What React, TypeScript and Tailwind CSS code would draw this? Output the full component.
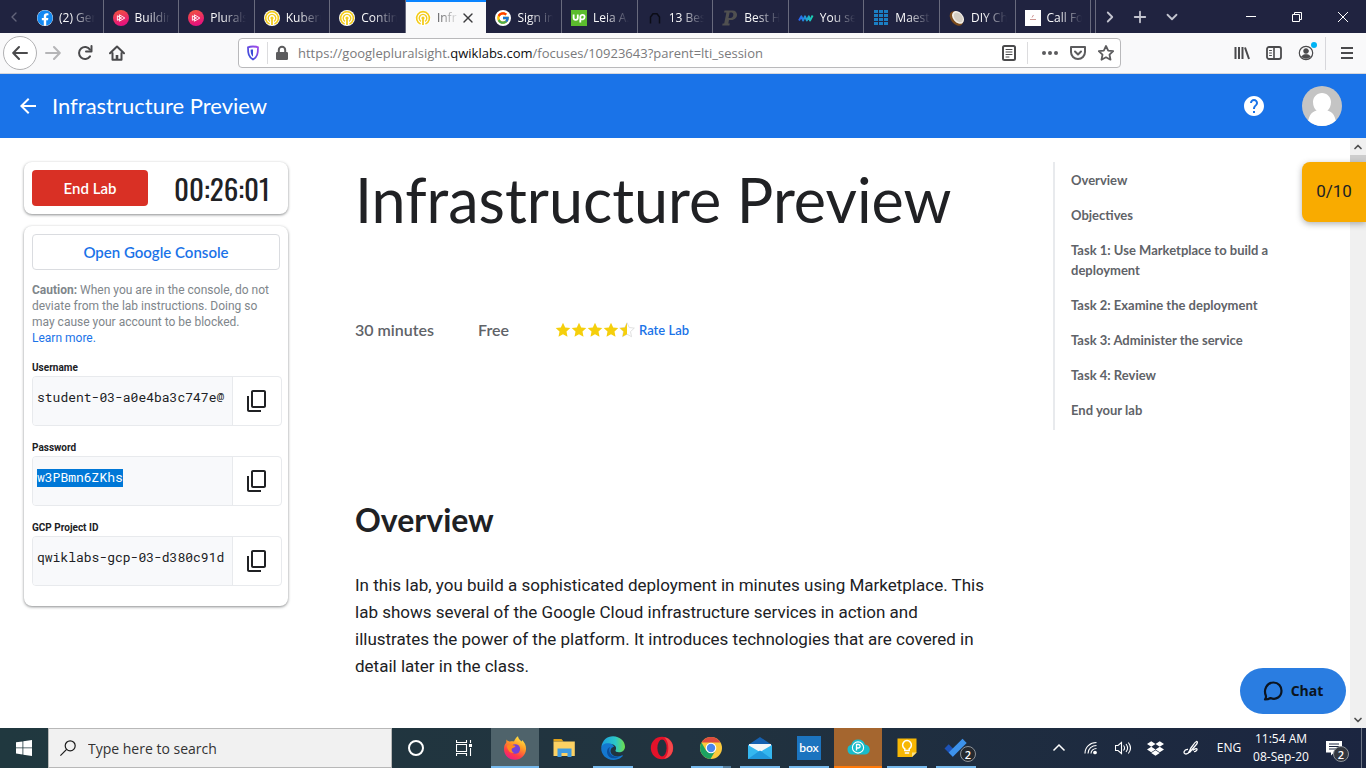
import type { ReactNode } from "react";
import { MdArrowBack, MdContentCopy, MdHelp } from "react-icons/md";
import { FaDropbox, FaFacebook } from "react-icons/fa";
import { FcGoogle } from "react-icons/fc";
import { ChevronDown, ChevronLeft, ChevronRight, ChevronUp, Plus, X } from "lucide-react";

const ui = "font-['Open_Sans','Noto_Sans',sans-serif]";
const product = "font-['Lato','Open_Sans',sans-serif]";

/* ---------- favicons ---------- */

const Pluralsight = () => (
  <svg viewBox="0 0 16 16" className="size-4">
    <defs>
      <linearGradient id="ps" x1="0" y1="0" x2="0.3" y2="1">
        <stop offset="0" stopColor="#f2583a" />
        <stop offset="1" stopColor="#e6127d" />
      </linearGradient>
    </defs>
    <circle cx="8" cy="8" r="8" fill="url(#ps)" />
    <path d="M6.4 4.8 11.8 8l-5.4 3.2zM4.4 5.8 8.6 8l-4.2 2.3z" fill="none" stroke="#fff" strokeWidth="0.9" />
  </svg>
);

const Qwiklabs = () => (
  <svg viewBox="0 0 16 16" className="size-4">
    <circle cx="8" cy="8" r="8" fill="#fff" />
    <g fill="none" stroke="#f4cc1c">
      <path d="M5.6 14A6.4 6.4 0 1 1 10.4 14" strokeWidth="1.6" />
      <path d="M6 11.4A3.8 3.8 0 1 1 10 11.4" strokeWidth="1.4" />
      <path d="M8 8v7" strokeWidth="1.8" />
    </g>
    <circle cx="8" cy="8" r="1.6" fill="#f4cc1c" />
  </svg>
);

const Upwork = () => (
  <svg viewBox="0 0 16 16" className="size-4">
    <path d="M0 0h16v16H0z" fill="#5bbc2e" />
    <path d="M2.6 4.5v3.3c0 2.8 4.2 2.8 4.2 0V4.5M9.3 12.6V7.2c0-3.2 4.3-3 4.3-.2 0 2.6-3 3-4.3 1.6" fill="none" stroke="#fff" strokeWidth="1.8" />
  </svg>
);

const Arch = () => (
  <svg viewBox="0 0 16 16" className="size-4">
    <path d="M3.5 13.5V7L6 3.8h4L12.5 7v6.5" fill="none" stroke="#0b0c16" strokeWidth="1.5" />
  </svg>
);

const LetterMark = () => (
  <svg viewBox="0 0 16 16" className="size-4">
    <path d="M2.500.500h8c6.500 0 6 9.500-1.500 9.500H7l-.7 3.500h1.500l-.4 2H.2l.4-2h1.600L4.400 2.500H2zM7.600 2.500 6.500 8h1.800c3.500 0 4-5.500 1.300-5.500z" fill="#505050" fillRule="evenodd" />
  </svg>
);

const Wave = () => (
  <svg viewBox="0 0 16 16" className="size-4">
    <defs>
      <linearGradient id="wave">
        <stop offset="0" stopColor="#2a63f6" />
        <stop offset="1" stopColor="#19d3b0" />
      </linearGradient>
    </defs>
    <path d="m1 10.5 2.4-4.2 1.6 4.2 2-4.2 1.8 4.2 2-4.2 1.2 4.2 2.6-5" fill="none" stroke="url(#wave)" strokeWidth="1.9" strokeLinejoin="round" />
  </svg>
);

const Grid = () => (
  <svg viewBox="0 0 16 16" className="size-4" fill="#1b7fc4">
    {[1, 5, 9, 13].map((y) => [1, 6, 11].map((x) => <path key={`${x}-${y}`} d={`M${x} ${y - 1}h4v3h-4z`} />))}
  </svg>
);

const Coconut = () => (
  <svg viewBox="0 0 16 16" className="size-4">
    <ellipse cx="7.5" cy="8.4" rx="5.6" ry="8.2" transform="rotate(-40 7.5 8.4)" fill="#7a4a1c" />
    <ellipse cx="9" cy="7.4" rx="5" ry="7.2" transform="rotate(-40 9 7.4)" fill="#f3efe8" />
    <ellipse cx="9.3" cy="7.4" rx="3.7" ry="5.6" transform="rotate(-40 9.3 7.4)" fill="#d5cec3" />
  </svg>
);

const Card = () => (
  <svg viewBox="0 0 16 16" className="size-4">
    <path d="M0 0h16v16H0z" fill="#fff" />
    <path d="M7 7.5 8.5 5M5 9.5h6" stroke="#c98b86" strokeWidth="0.9" />
  </svg>
);

/* ---------- browser chrome ---------- */

type TabData = { label: string; icon: ReactNode; active?: boolean };

const tabs: TabData[] = [
  { label: "(2) Ger", icon: <FaFacebook className="size-4 rounded-full bg-white text-[#1489f2]" /> },
  { label: "Buildin", icon: <Pluralsight /> },
  { label: "Plurals", icon: <Pluralsight /> },
  { label: "Kubern", icon: <Qwiklabs /> },
  { label: "Contin", icon: <Qwiklabs /> },
  { label: "Infr", icon: <Qwiklabs />, active: true },
  { label: "Sign in", icon: <FcGoogle className="size-4 rounded-full bg-white p-px" /> },
  { label: "Leia A.", icon: <Upwork /> },
  { label: "13 Bes", icon: <Arch /> },
  { label: "Best H", icon: <LetterMark /> },
  { label: "You se", icon: <Wave /> },
  { label: "Maest", icon: <Grid /> },
  { label: "DIY Ch", icon: <Coconut /> },
  { label: "Call Fo", icon: <Card /> },
];

function TabStrip() {
  return (
    <div className="flex h-[33px] shrink-0 bg-[#202340]">
      <button aria-label="Scroll tabs left" className="flex w-7 shrink-0 items-center justify-center text-[#62647a]">
        <ChevronLeft className="size-4" />
      </button>
      <div role="tablist" className="flex min-w-0 flex-1">
        {tabs.map((tab, i) =>
          tab.active ? (
            <div key={i} className="flex min-w-0 flex-1 items-center border-t-2 border-[#0a84ff] bg-[#f9f9fa] pr-[10px] pl-[9px]">
              <button role="tab" aria-selected className="flex min-w-0 flex-1 items-center gap-[6px]">
                <span className="shrink-0">{tab.icon}</span>
                <span className="flex-1 overflow-hidden text-left text-xs leading-5 whitespace-nowrap text-[#0c0c0d] [mask-image:linear-gradient(to_right,#000b,transparent)]">
                  {tab.label}
                </span>
              </button>
              <button aria-label="Close tab" className="shrink-0 text-[#3c3c3e]">
                <X className="size-4" />
              </button>
            </div>
          ) : (
            <button
              key={i}
              role="tab"
              aria-selected={false}
              className="flex min-w-0 flex-1 items-center gap-[6px] border-r border-[#686a7d] pt-[2px] pr-1 pl-[9px]"
            >
              <span className="shrink-0">{tab.icon}</span>
              <span className="flex-1 overflow-hidden text-left text-xs leading-5 whitespace-nowrap text-[#f9f9fa] [mask-image:linear-gradient(to_right,#000_30%,transparent_90%)]">
                {tab.label}
              </span>
            </button>
          ),
        )}
      </div>
      <div className="ml-1 flex shrink-0 items-center border-l border-[#686a7d] text-[#c3c4cf]">
        <button aria-label="Scroll tabs right" className="flex w-7 justify-center">
          <ChevronRight className="size-[18px]" strokeWidth={2.4} />
        </button>
        <button aria-label="New tab" className="flex w-8 justify-center">
          <Plus className="size-[18px]" strokeWidth={2.4} />
        </button>
        <button aria-label="List all tabs" className="flex w-8 justify-center">
          <ChevronDown className="size-[18px]" strokeWidth={2.4} />
        </button>
      </div>
      <div className="ml-10 flex shrink-0 text-white">
        {[
          ["Minimise", "M1 5.5h10"],
          ["Restore", "M1.5 3.5h7v7h-7zM3.5 3V1.5h7v7H9"],
          ["Close", "m1 1 10 10M11 1 1 11"],
        ].map(([name, d]) => (
          <button key={name} aria-label={name} className="flex w-[46px] items-center justify-center">
            <svg viewBox="0 0 12 12" className="size-3">
              <path d={d} fill="none" stroke="currentColor" />
            </svg>
          </button>
        ))}
      </div>
    </div>
  );
}

function ToolButton({ label, children }: { label: string; children: ReactNode }) {
  return (
    <button aria-label={label} className="flex w-8 shrink-0 items-center justify-center text-[#4a4a4c]">
      <svg viewBox="0 0 16 16" className="size-4" fill="none" stroke="currentColor" strokeWidth="2" strokeLinecap="round" strokeLinejoin="round">
        {children}
      </svg>
    </button>
  );
}

function Toolbar() {
  return (
    <div className="flex h-[41px] shrink-0 items-center border-b border-[#d7d7db] bg-[#f9f9fa]">
      <button aria-label="Back" className="ml-[3px] flex size-[34px] shrink-0 items-center justify-center rounded-full border border-[#b1b1b3] bg-white text-[#4a4a4c]">
        <svg viewBox="0 0 16 16" className="size-4" fill="none" stroke="currentColor" strokeWidth="2" strokeLinecap="round" strokeLinejoin="round">
          <path d="M15 8H1.5M7 2 1.2 8 7 14" />
        </svg>
      </button>
      <button aria-label="Forward" className="flex w-8 shrink-0 items-center justify-center text-[#b5b5b7]">
        <svg viewBox="0 0 16 16" className="size-4" fill="none" stroke="currentColor" strokeWidth="2" strokeLinecap="round" strokeLinejoin="round">
          <path d="M1 8h13.5M9 2l5.8 6L9 14" />
        </svg>
      </button>
      <ToolButton label="Reload">
        <path d="M13 11.4A6 6 0 1 1 13 4.6" />
        <path d="M14.5 1v5.5H9" />
      </ToolButton>
      <ToolButton label="Home">
        <path d="M1 8.2 8 1.5l7 6.7M3.5 8v6.8h9V8" />
        <path d="M8 14v-4" strokeWidth="2.6" strokeLinecap="butt" />
      </ToolButton>
      <div className="mr-[105px] ml-[105px] flex h-[30px] min-w-0 flex-1 items-center rounded-sm border border-[#b9b9bb] bg-white">
        <button aria-label="Tracking protection" className="flex w-7 shrink-0 justify-center">
          <svg viewBox="0 0 16 16" className="size-4">
            <defs>
              <linearGradient id="shield" x1="1" y1="0" x2="0" y2="1">
                <stop offset="0" stopColor="#a54bea" />
                <stop offset="1" stopColor="#2a4fd8" />
              </linearGradient>
            </defs>
            <path d="M8 1.5c2 0 4 .4 5 .9 0 6-.6 9.6-5 12.1-4.400-2.500-5-6.100-5-12.100 1-.5 3-.9 5-.9z" fill="none" stroke="url(#shield)" strokeWidth="1.8" />
            <path d="M8 4.500c-1 0-1.800.1-2.400.3.1 3.500.6 5.400 2.400 6.900z" fill="#3a4bd6" />
          </svg>
        </button>
        <span className="h-[22px] w-px shrink-0 bg-[#dcdcde]" />
        <button aria-label="Site information" className="flex w-7 shrink-0 justify-center">
          <svg viewBox="0 0 16 16" className="size-4">
            <path d="M4.800 8V5a3.200 3.200 0 0 1 6.400 0v3" fill="none" stroke="#5c5c5e" strokeWidth="2" />
            <rect x="2" y="7" width="12" height="8" rx="1.200" fill="#5c5c5e" />
          </svg>
        </button>
        <label className="relative min-w-0 flex-1 truncate pl-[2px] text-[13px] leading-6 text-[#7a7a7c]">
          <input aria-label="Address" className="absolute inset-0 w-full opacity-0" />
          https://googlepluralsight.<span className="text-[#0c0c0d]">qwiklabs.com</span>/focuses/10923643?parent=lti_session
        </label>
        <ToolButton label="Reader view">
          <rect x="2" y="1" width="12" height="14" rx="1.500" />
          <path d="M5 4.500h6M5 7h6M5 9.500h6M5 12h3" strokeWidth="1" />
        </ToolButton>
        <span className="ml-[2px] h-[22px] w-px shrink-0 bg-[#dcdcde]" />
        <div className="flex w-[92px] shrink-0 justify-end">
          <button aria-label="Page actions" className="flex w-7 items-center justify-center text-[#5c5c5e]">
            <svg viewBox="0 0 16 16" className="size-4" fill="currentColor">
              <circle cx="2" cy="8" r="2" />
              <circle cx="8" cy="8" r="2" />
              <circle cx="14" cy="8" r="2" />
            </svg>
          </button>
          <button aria-label="Save to Pocket" className="flex w-7 items-center justify-center text-[#5c5c5e]">
            <svg viewBox="0 0 16 16" className="size-4" fill="none" stroke="currentColor" strokeWidth="2" strokeLinecap="round" strokeLinejoin="round">
              <path d="M1 2h14v5a7 7 0 0 1-14 0z" />
              <path d="m5 6.500 3 3 3-3" />
            </svg>
          </button>
          <button aria-label="Bookmark" className="flex w-7 items-center justify-center text-[#5c5c5e]">
            <svg viewBox="0 0 16 16" className="size-4" fill="none" stroke="currentColor" strokeWidth="1.800" strokeLinejoin="round">
              <path d="m8 1 2.200 4.600 5 .6-3.700 3.500 1 5L8 12.300l-4.500 2.400 1-5L.8 6.200l5-.6z" />
            </svg>
          </button>
        </div>
      </div>
      <ToolButton label="Library">
        <path d="M1.500 2v12M5 2v12M8.500 2v12M11 2.500l4 11.500" strokeLinecap="butt" />
      </ToolButton>
      <ToolButton label="Sidebars">
        <rect x="1" y="2" width="14" height="12" rx="2" strokeWidth="1.800" />
        <path d="M8 2v12" strokeWidth="1.600" />
        <path d="M3.500 5.500h2M3.500 8h2M3.500 10.500h2" strokeWidth="1" />
      </ToolButton>
      <div className="relative">
        <ToolButton label="Account">
          <circle cx="8" cy="8" r="6.700" strokeWidth="1.200" />
          <circle cx="8" cy="6" r="2.500" fill="currentColor" strokeWidth="0.500" />
          <path d="M3.600 11.800c1.200-3.400 7.600-3.400 8.800 0-2.400 2.300-6.400 2.300-8.800 0z" fill="currentColor" strokeWidth="0.500" />
        </ToolButton>
        <span className="absolute -top-[3px] right-[5px] size-[6px] rounded-full bg-[#00b3f4]" />
      </div>
      <span className="ml-[3px] h-[33px] w-px shrink-0 bg-[#d7d7db]" />
      <div className="mr-[3px] ml-[5px] flex">
        <ToolButton label="Menu">
          <path d="M2 3h12M2 8h12M2 13h12" strokeLinecap="butt" />
        </ToolButton>
      </div>
    </div>
  );
}

/* ---------- lab page ---------- */

function LabHeader() {
  return (
    <header className={`flex h-16 shrink-0 items-center bg-[#1a73e8] px-6 text-white ${product}`}>
      <a href="#back" aria-label="Back" className="-ml-2 flex w-6 justify-center">
        <MdArrowBack className="size-6" />
      </a>
      <h2 className="ml-3 flex-1 text-[22px] leading-8">Infrastructure Preview</h2>
      <button aria-label="Help" className="mr-9">
        <MdHelp className="size-6" />
      </button>
      <button aria-label="Account">
        <svg viewBox="0 0 40 40" className="size-10 rounded-full">
          <path d="M0 0h40v40H0z" fill="#c4c4c4" />
          <path d="M20 7c5 0 9 4 9 9 0 4-1.600 7-3.600 8.600C31 26 34 31 34.500 40h-29C6 31 9 26 14.600 24.600 12.600 23 11 20 11 16c0-5 4-9 9-9z" fill="#fff" />
        </svg>
      </button>
    </header>
  );
}

const fields = [
  { id: "username", label: "Username", value: "student-03-a0e4ba3c747e@" },
  { id: "password", label: "Password", value: "w3PBmn6ZKhs", selected: true },
  { id: "project", label: "GCP Project ID", value: "qwiklabs-gcp-03-d380c91d" },
];

const cardShadow = "rounded-lg bg-white shadow-[0_1px_3px_rgba(60,64,67,0.6)]";

function LabPanel() {
  return (
    <aside className="flex w-[264px] shrink-0 flex-col gap-3 font-['Roboto',sans-serif]">
      <div className={`flex h-[52px] items-center p-2 ${cardShadow}`}>
        <button className={`h-9 w-[116px] rounded bg-[#d93025] text-[15px] font-semibold text-white ${product}`}>End Lab</button>
        <time className="flex-1 pl-4 text-center font-['Oswald','Roboto_Condensed','Liberation_Sans_Narrow',sans-serif] text-[29px] leading-9 text-[#202124]">
          00:26:01
        </time>
      </div>
      <div className={`px-2 pt-2 pb-5 ${cardShadow}`}>
        <button className={`h-9 w-full rounded border border-[#dadce0] text-[15px] font-semibold text-[#1a73e8] ${product}`}>
          Open Google Console
        </button>
        <p className="mt-3 text-xs leading-4 text-[#80868b]">
          <b>Caution:</b> When you are in the console, do not deviate from the lab instructions. Doing so may cause your
          account to be blocked.{" "}
          <a href="#learn" className="block text-[#1a73e8]">
            Learn more.
          </a>
        </p>
        <div className="mt-[14px] -mr-[2px] flex flex-col gap-[14px]">
          {fields.map((f) => (
            <div key={f.id}>
              <label htmlFor={f.id} className="block text-[10px] leading-4 font-bold text-[#202124]">
                {f.label}
              </label>
              <div className="flex h-[50px] overflow-hidden rounded border border-[#e8eaed]">
                <div className="min-w-0 flex-1 bg-[#f8f9fb] px-1 pt-3">
                  <input
                    id={f.id}
                    readOnly
                    value={f.value}
                    className={
                      f.selected
                        ? "block field-sizing-content h-[18px] bg-[#0078d7] font-['Roboto_Mono','Liberation_Mono',monospace] text-[13px] text-white outline-none"
                        : "block h-[18px] w-full bg-transparent font-['Roboto_Mono','Liberation_Mono',monospace] text-[13px] text-[#202124] outline-none"
                    }
                  />
                </div>
                <button aria-label={`Copy ${f.label}`} className="flex w-[49px] items-center justify-center border-l border-[#e8eaed] text-[#202124]">
                  <MdContentCopy className="size-6 -scale-y-100" />
                </button>
              </div>
            </div>
          ))}
        </div>
      </div>
    </aside>
  );
}

const star = "m8 .8 2.200 4.700 5.100.6-3.800 3.500 1 5.100L8 12.200l-4.500 2.500 1-5.100L.7 6.100l5.100-.6z";

function Article() {
  return (
    <article className="ml-[67px] min-w-0 flex-1 pr-[60px]">
      <h1 className={`-mr-10 text-[61px] leading-[76px] whitespace-nowrap text-[#202124] ${product}`}>Infrastructure Preview</h1>
      <div className={`mt-[82px] flex items-center text-[#5f6368] ${product}`}>
        <span className="w-[123px] text-base leading-5 font-semibold">30 minutes</span>
        <span className="w-[77px] text-base leading-5 font-semibold">Free</span>
        <span className="flex" role="img" aria-label="Rated 4.5 out of 5">
          {[0, 1, 2, 3].map((i) => (
            <svg key={i} viewBox="0 0 16 16" className="size-4">
              <path d={star} fill="#f5cf0c" />
            </svg>
          ))}
          <svg viewBox="0 0 16 16" className="size-4">
            <defs>
              <clipPath id="half">
                <path d="M0 0h8v16H0z" />
              </clipPath>
            </defs>
            <path d={star} fill="none" stroke="#d8d8d8" strokeWidth="0.800" />
            <path d={star} fill="#f5cf0c" clipPath="url(#half)" />
          </svg>
        </span>
        <a href="#rate" className="ml-1 text-[13px] leading-5 font-semibold text-[#1a73e8]">
          Rate Lab
        </a>
      </div>
      <h2 className={`mt-40 text-[32px] leading-10 font-bold text-[#202124] ${product}`}>Overview</h2>
      <p className="mt-8 font-['Roboto',sans-serif] text-[17px] leading-[27px] text-[#202124]">
        In this lab, you build a sophisticated deployment in minutes using Marketplace. This lab shows several of the
        Google Cloud infrastructure services in action and illustrates the power of the platform. It introduces
        technologies that are covered in detail later in the class.
      </p>
    </article>
  );
}

const outline = [
  "Overview",
  "Objectives",
  "Task 1: Use Marketplace to build a deployment",
  "Task 2: Examine the deployment",
  "Task 3: Administer the service",
  "Task 4: Review",
  "End your lab",
];

function Outline() {
  return (
    <nav className={`mr-16 w-[233px] shrink-0 self-start border-l-2 border-[#e8eaed] pt-2 pb-[10px] pl-4 text-[13px] leading-5 font-bold text-[#5f6368] ${product}`}>
      <ul className="flex flex-col gap-[15px]">
        {outline.map((item) => (
          <li key={item}>
            <a href="#section" className="block">
              {item}
            </a>
          </li>
        ))}
      </ul>
    </nav>
  );
}

function ScrollBar() {
  return (
    <div className="flex w-4 shrink-0 flex-col items-center bg-[#f0f0f0] text-[#505050]">
      <button aria-label="Scroll up" className="flex h-[17px] items-center">
        <ChevronUp className="size-3" strokeWidth={3.5} />
      </button>
      <div className="h-12 w-full bg-[#cdcdcd]" />
      <button aria-label="Scroll down" className="mt-auto flex h-[17px] items-center">
        <ChevronDown className="size-3" strokeWidth={3.5} />
      </button>
    </div>
  );
}

/* ---------- taskbar ---------- */

const Firefox = () => (
  <svg viewBox="0 0 24 24" className="size-6">
    <defs>
      <linearGradient id="fx" x1="0.8" y1="0" x2="0.3" y2="1">
        <stop offset="0" stopColor="#fff04a" />
        <stop offset="0.4" stopColor="#ff9a25" />
        <stop offset="0.75" stopColor="#ff3b47" />
        <stop offset="1" stopColor="#ee1a86" />
      </linearGradient>
    </defs>
    <path d="M3.500 3.500C4.500 5 5.500 5.300 7 5.600 8.500 5 10 5 11 5.500 12 3 13.500 1 15 .3c.3 2.500 2 3.600 3.300 5 .6.5.7-.6.8-1.200C22 7 23.300 10 23 13.500 22.500 19.500 18 23.700 12 23.700 5.500 23.700 1 19 1 13c0-3 .7-4.500 2.200-6.200z" fill="url(#fx)" />
    <circle cx="12.300" cy="13" r="4.800" fill="#7441d8" />
    <path d="M4 9.500c3-1.600 6-.5 8.500.5-.5 1.500-2.500 1.500-3.500 2.500s0 3.500 2 4.500c-4 .5-7-3-7-7.500z" fill="#ff8a1d" />
  </svg>
);

const Explorer = () => (
  <svg viewBox="0 0 24 24" className="size-6">
    <path d="M1.500 3h8l2 2.500h-10z" fill="#e0a21a" />
    <path d="M1.500 5.500h21.300V20H1.500z" fill="#fcd163" />
    <path d="M5.500 21v-8.500h14V21h-4v-4h-6v4z" fill="#3f9be0" />
  </svg>
);

const Edge = () => (
  <svg viewBox="0 0 24 24" className="size-6">
    <defs>
      <linearGradient id="edgeTop">
        <stop offset="0" stopColor="#1b9fe0" />
        <stop offset="0.6" stopColor="#2cc7c8" />
        <stop offset="1" stopColor="#6fe04a" />
      </linearGradient>
    </defs>
    <path d="M.3 11C1.500 4 6 .2 12 .2c7 0 12 5.300 12 10.300 0 4-3 5.800-6 5.800-2.500 0-4-1-3.500-2 2-3-1-6.300-5-6.300-4.500 0-7.500 1.500-9.200 3z" fill="url(#edgeTop)" />
    <path d="M.2 12C.5 9 4 6.800 8 7.300c3 .4 5 2.500 5 3.800-5 0-5.500 10.500 5.500 9.200 1.500-.2 2.800-1.300 3.300-.8.4.5-3.300 4.400-9.300 4.400C5 23.900 0 18.500.2 12z" fill="#1478d0" />
    <path d="M9 11c-2.500 5 1.500 11.500 9.500 9.300C14 24.500 5.800 22 6 15.500 6.100 13.500 7.200 11.700 9 11z" fill="#0c4f9c" />
  </svg>
);

const Opera = () => (
  <svg viewBox="0 0 24 24" className="size-6">
    <circle cx="12" cy="12" r="11.200" fill="#e4122a" />
    <path d="M14 1.200c12 1.800 12 19.800 0 21.600 3-2 4.300-6.500 4.300-10.800S17 3.200 14 1.200z" fill="#f6494b" />
    <ellipse cx="12" cy="12" rx="4.600" ry="8.500" fill="#22333f" />
  </svg>
);

const Chrome = () => (
  <svg viewBox="0 0 24 24" className="size-6">
    <circle cx="12" cy="12" r="11" fill="#fbc93d" />
    <path d="M2.500 6.500a11 11 0 0 1 19 0H12z" fill="#dd4b3e" />
    <path d="M2.500 6.500A11 11 0 0 0 11.500 23l5-8.500-9.300.3z" fill="#1ca261" />
    <circle cx="12" cy="12" r="5.300" fill="#fff" />
    <circle cx="12" cy="12" r="4.200" fill="#4a87ee" />
  </svg>
);

const Mail = () => (
  <svg viewBox="0 0 24 24" className="size-6">
    <path d="M0 9 12 1l12 8v3H0z" fill="#1560b0" />
    <path d="M1 8h22v8H1z" fill="#f4f6f8" />
    <path d="M0 9v14h24V9L12 16z" fill="#35b7ef" />
    <path d="M0 23h24L12 14.500z" fill="#2198dc" />
  </svg>
);

const Box = () => (
  <span className="flex size-6 items-center justify-center bg-[#1c74bf] font-['Lato',sans-serif] text-xs leading-none font-semibold text-white">box</span>
);

const CloudP = () => (
  <svg viewBox="0 0 24 24" className="size-6">
    <path d="M6 18.500a5 5 0 0 1-.8-9.800A7.200 7.200 0 0 1 19 8.500a5 5 0 0 1-.5 10z" fill="#18bccb" />
    <circle cx="12" cy="11.500" r="5.600" fill="none" stroke="#fff" strokeWidth="1.100" />
    <path d="M10.500 14.500v-6h1.900a1.700 1.700 0 0 1 0 3.500h-1.900" fill="none" stroke="#fff" strokeWidth="1.300" />
  </svg>
);

const Keep = () => (
  <svg viewBox="0 0 24 24" className="size-6">
    <path d="M2.500 2.500h19v14l-4.500 4.500H2.500z" fill="#f7b704" />
    <path d="M17 21v-4.500h4.500z" fill="#fbe28c" />
    <path d="M9.800 14.500v-1.700a4.400 4.400 0 1 1 4.400 0v1.700zM9.800 17h4.400" fill="none" stroke="#fff" strokeWidth="1.500" />
  </svg>
);

const Todo = () => (
  <span className="relative">
    <svg viewBox="0 0 24 24" className="size-6">
      <path d="m.500 12.500 4.200-4.200L13 16.500l-4.200 4.200z" fill="#1c52b8" />
      <path d="M8.800 20.700 4.700 16.500 18.500 2.700 22.700 7z" fill="#3d93ec" />
    </svg>
    <span className="absolute top-[10px] left-4 flex size-4 items-center justify-center rounded-full border border-[#8c9299] bg-[#25292e] text-[11px] leading-none font-semibold text-white">
      2
    </span>
  </span>
);

type App = { name: string; icon: ReactNode; tile?: string; bar?: string };

const apps: App[] = [
  { name: "Firefox", icon: <Firefox />, tile: "bg-[#4f636b]", bar: "w-12 bg-[#76b9ed]" },
  { name: "File Explorer", icon: <Explorer /> },
  { name: "Edge", icon: <Edge />, bar: "w-10 bg-[#76b9ed]" },
  { name: "Opera", icon: <Opera /> },
  { name: "Chrome", icon: <Chrome />, bar: "w-10 border-r-8 border-[#557f9f] bg-[#76b9ed]" },
  { name: "Mail", icon: <Mail />, bar: "w-10 bg-[#76b9ed]" },
  { name: "Box", icon: <Box />, bar: "w-10 bg-[#76b9ed]" },
  { name: "pCloud", icon: <CloudP />, tile: "bg-[#a5662f]", bar: "w-12 bg-[#ff7a0a]" },
  { name: "Keep", icon: <Keep />, bar: "w-10 bg-[#76b9ed]" },
  { name: "To Do", icon: <Todo />, bar: "w-10 bg-[#76b9ed]" },
];

function TrayButton({ label, width, children }: { label: string; width: string; children: ReactNode }) {
  return (
    <button aria-label={label} className={`flex justify-center ${width}`}>
      <svg viewBox="0 0 16 16" className="size-4" fill="none" stroke="currentColor" strokeWidth="1.100">
        {children}
      </svg>
    </button>
  );
}

function Taskbar() {
  return (
    <footer className="flex h-10 shrink-0 bg-linear-to-r from-[#20383f] via-[#21333f] to-[#1b2540] text-white">
      <button aria-label="Start" className="flex w-12 shrink-0 items-center justify-center">
        <svg viewBox="0 0 16 16" className="size-4" fill="#fff">
          <path d="M0 2.300 6.500 1.400v6.100H0zM7.300 1.300 16 0v7.500H7.300zM0 8.300h6.500v6.200L0 13.600zM7.300 8.300H16V16l-8.700-1.300z" />
        </svg>
      </button>
      <label className="flex w-[344px] items-center gap-3 border border-[#b8b8b8] bg-[#f1f1f1] pl-[11px] text-[#1b1b1b]">
        <svg viewBox="0 0 16 16" className="size-4" fill="none" stroke="currentColor" strokeWidth="1.200">
          <circle cx="10.200" cy="5.800" r="5" />
          <path d="M6.600 9.400.4 15.600" />
        </svg>
        <input aria-label="Search" placeholder="Type here to search" className="min-w-0 flex-1 bg-transparent text-[14px] outline-none placeholder:text-[#333]" />
      </label>
      <button aria-label="Cortana" className="flex w-12 shrink-0 items-center justify-center">
        <span className="size-4 rounded-full border-2 border-white" />
      </button>
      <button aria-label="Task view" className="mr-[3px] flex w-12 shrink-0 items-center justify-center">
        <svg viewBox="0 0 16 16" className="size-4" fill="none" stroke="#fff" strokeWidth="1.100">
          <path d="M.5 0v2.500h10V0M.5 16v-2.500h10V16M.5 4.500h10v7H.5zM14.500 0v3M14.500 8v8" />
          <path d="M13 4h3v3h-3z" fill="#fff" stroke="none" />
        </svg>
      </button>
      <div className="flex gap-px">
        {apps.map((app) => (
          <button key={app.name} aria-label={app.name} className={`relative flex w-12 items-center justify-center ${app.tile ?? ""}`}>
            {app.icon}
            {app.bar && <span className={`absolute bottom-0 h-[2px] ${app.bar}`} />}
          </button>
        ))}
      </div>
      <div className="ml-auto flex items-center text-xs leading-[18px]">
        <TrayButton label="Show hidden icons" width="w-8">
          <path d="M2.500 10.500 8 5l5.500 5.500" strokeWidth="1.500" />
        </TrayButton>
        <TrayButton label="Network" width="w-8">
          <path d="M2 13.500C2 7 7 2.500 13.500 2.500M5 13.500c0-5 4-8 8.500-8M8 13.500c0-3 2.500-5 5.500-5" />
          <circle cx="12" cy="12.500" r="1.300" fill="#fff" />
        </TrayButton>
        <TrayButton label="Volume" width="w-8">
          <path d="M.5 5.500h2.500L6.500 2.500v11L3 10.500H.5zM8.500 5.500c1.300 1.500 1.300 3.500 0 5M11 4c2 2.500 2 5.500 0 8M13.300 2.500c2.800 3.500 2.800 7.500 0 11" />
        </TrayButton>
        <button aria-label="Dropbox" className="flex w-8 justify-center">
          <FaDropbox className="size-[17px]" />
        </button>
        <TrayButton label="Pen" width="w-10">
          <path d="M5 9.500c-4-.5-5.500 4.500-2 4.500 4 0 3-4 6-7.500 1.500-2 3-4.500 4.500-5 1.500 0 1 2-1 4L6.500 12.500M10 10.500c1-1.500 3.500-2.500 4-1.500s-1.500 3-3 2.500" strokeWidth="1.300" />
        </TrayButton>
        <button className="w-9 text-center">ENG</button>
        <button className="w-[68px] text-center">
          <time className="block">11:54 AM</time>
          <time className="block">08-Sep-20</time>
        </button>
        <button aria-label="Notifications" className="relative flex w-[38px] justify-center">
          <svg viewBox="0 0 16 16" className="size-4">
            <path d="M0 1h16v11.500H8L5 15.500v-3H0z" fill="#fff" />
            <path d="M3 4h10M3 6.500h10M3 9h10" stroke="#1b2540" strokeWidth="1" />
          </svg>
          <span className="absolute top-[6px] right-1 flex size-4 items-center justify-center rounded-full border border-[#8c9299] bg-[#33373f] text-[11px] leading-none font-semibold">
            2
          </span>
        </button>
        <span className="mr-1 ml-2 h-10 w-px bg-[#6d7585]" />
      </div>
    </footer>
  );
}

export default function App() {
  return (
    <div className={`flex h-screen min-h-[640px] flex-col overflow-hidden bg-white ${ui}`}>
      <TabStrip />
      <Toolbar />
      <LabHeader />
      <main className="relative flex min-h-0 flex-1 overflow-hidden">
        <div className="flex min-w-0 flex-1 items-start overflow-hidden pt-6 pl-6">
          <LabPanel />
          <Article />
          <Outline />
        </div>
        <ScrollBar />
        <button className="absolute top-6 right-0 flex h-[60px] w-16 items-center justify-center rounded-l-lg bg-[#f9ab00] font-['Roboto',sans-serif] text-[17px] text-[#202124] shadow-[0_2px_6px_rgba(60,64,67,0.4)]">
          0/10
        </button>
        <button className="absolute right-5 bottom-[14px] flex h-[46px] w-[106px] items-center justify-center gap-2 rounded-full bg-[#2a7de1] text-sm font-bold text-[#0b1420]">
          <svg viewBox="0 0 20 20" className="size-5" fill="none" stroke="currentColor" strokeWidth="2.200" strokeLinejoin="round">
            <path d="M2 18.500c.8-1 1.200-2.500.8-4C.5 9 3.500 1.500 10.500 1.500c5 0 8 4 8 8.200 0 6-5.500 9.800-11 7.300-1.500 1-3.500 1.500-5.500 1.500z" />
          </svg>
          Chat
        </button>
      </main>
      <Taskbar />
    </div>
  );
}
